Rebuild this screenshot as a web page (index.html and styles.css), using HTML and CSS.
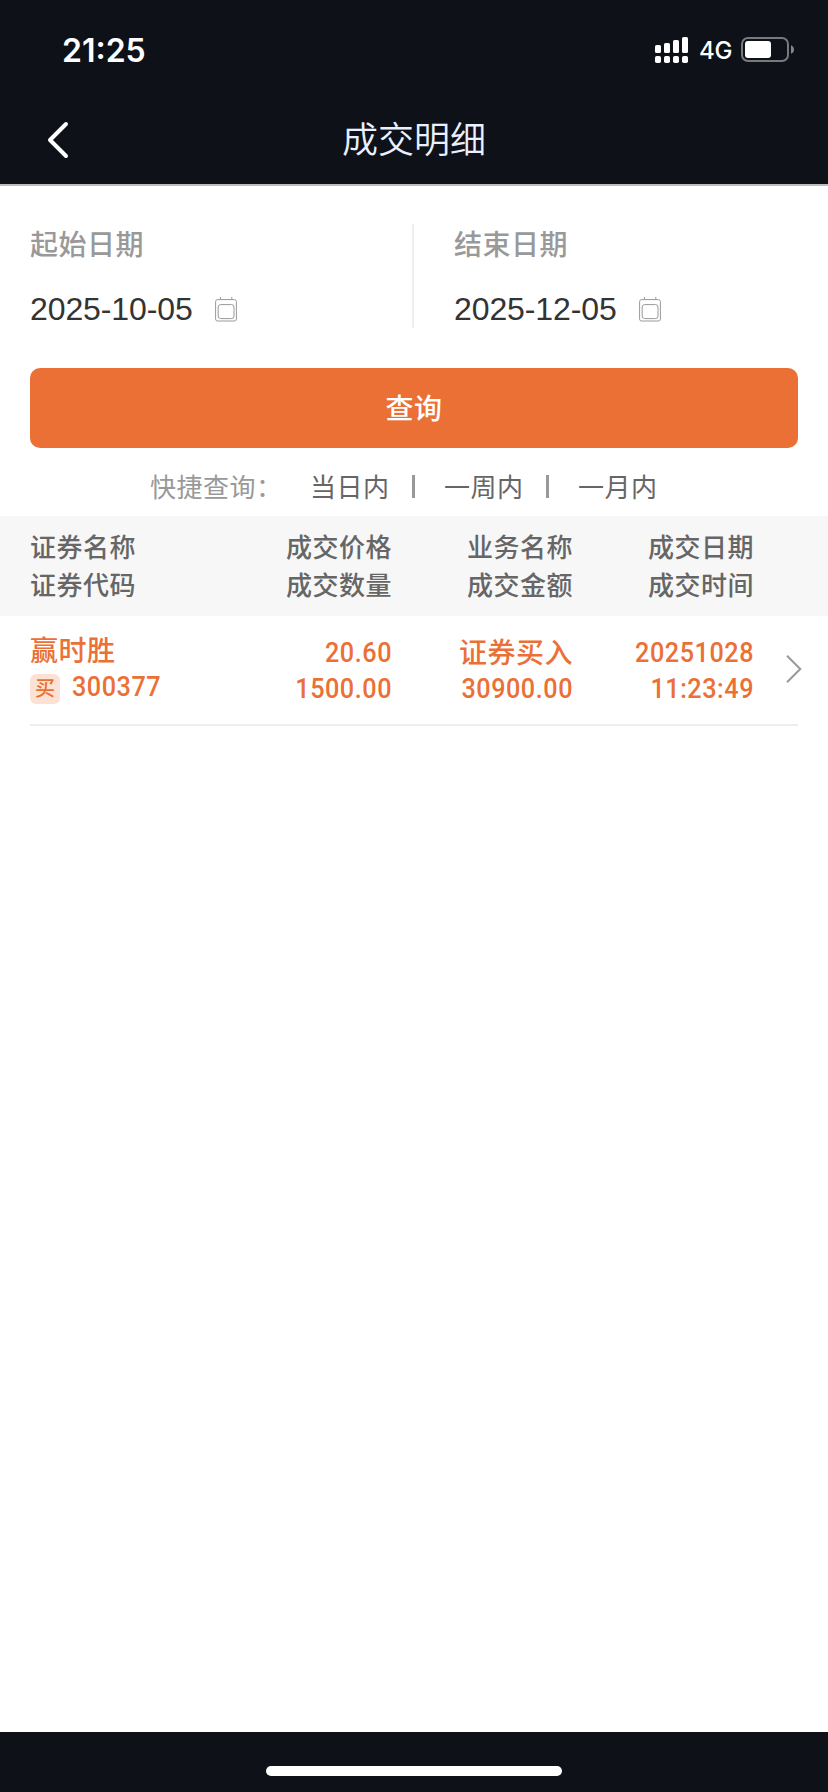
FILE: index.html
```html
<!DOCTYPE html>
<html lang="zh-CN">
<head>
<meta charset="utf-8">
<title>成交明细</title>
<link rel="stylesheet" href="styles.css">
</head>
<body>
<div class="screen">
  <header class="top">
    <div class="status">
      <span class="clock">21:25</span>
      <div class="indicators">
        <svg class="signal" width="34" height="26" viewBox="0 0 34 26" fill="#fff">
          <rect x="0" y="8" width="6" height="8" rx="1.5"/><rect x="9" y="6" width="6" height="10" rx="1.5"/><rect x="18" y="3" width="6" height="13" rx="1.5"/><rect x="27" y="0" width="6" height="16" rx="1.5"/>
          <rect x="0" y="19" width="6" height="7" rx="1.8"/><rect x="9" y="19" width="6" height="7" rx="1.8"/><rect x="18" y="19" width="6" height="7" rx="1.8"/><rect x="27" y="19" width="6" height="7" rx="1.8"/>
        </svg>
        <span class="network">4G</span>
        <svg class="battery" width="54" height="26" viewBox="0 0 54 26">
          <rect x="1" y="1" width="46" height="23" rx="6" fill="none" stroke="#77797d" stroke-width="2"/>
          <rect x="4" y="4" width="26" height="17" rx="3" fill="#fff"/>
          <path d="M50 8.2c1.8.7 3 2.3 3 4.3s-1.2 3.600-3 4.300z" fill="#85878a"/>
        </svg>
      </div>
    </div>
    <nav class="nav">
      <svg class="back" width="22" height="38" viewBox="0 0 22 38" fill="none" stroke="#fff" stroke-width="4" stroke-linecap="round" stroke-linejoin="round"><path d="M19 3 3 19l16 16"/></svg>
      <h1 class="title">成交明细</h1>
    </nav>
  </header>

  <main class="content">
    <section class="dates">
      <div class="date-field">
        <div class="label">起始日期</div>
        <div class="date"><span>2025-10-05</span>
          <svg class="calendar" width="22" height="25" viewBox="0 0 22 25" fill="none" stroke="#999"><rect x=".6" y="2.600" width="20.800" height="21.400" rx="2"/><rect x="3.200" y="7.600" width="15.800" height="14" rx="2.500"/><path d="M5.500 0v2.500M16.800 0v2.500"/></svg>
        </div>
      </div>
      <div class="date-field date-end">
        <div class="label">结束日期</div>
        <div class="date"><span>2025-12-05</span>
          <svg class="calendar" width="22" height="25" viewBox="0 0 22 25" fill="none" stroke="#999"><rect x=".6" y="2.600" width="20.800" height="21.400" rx="2"/><rect x="3.200" y="7.600" width="15.800" height="14" rx="2.500"/><path d="M5.500 0v2.500M16.800 0v2.500"/></svg>
        </div>
      </div>
    </section>

    <button class="query">查询</button>

    <div class="quick">
      <span class="quick-label">快捷查询：</span>
      <span class="quick-item">当日内</span><i class="bar"></i>
      <span class="quick-item">一周内</span><i class="bar"></i>
      <span class="quick-item">一月内</span>
    </div>

    <div class="row head">
      <div class="cell">证券名称<br>证券代码</div>
      <div class="cell">成交价格<br>成交数量</div>
      <div class="cell">业务名称<br>成交金额</div>
      <div class="cell">成交日期<br>成交时间</div>
    </div>

    <div class="row trade">
      <div class="cell stock">
        <div class="name">赢时胜</div>
        <div class="code"><span class="tag">买</span><span class="num">300377</span></div>
      </div>
      <div class="cell"><div class="num">20.60</div><div class="num">1500.00</div></div>
      <div class="cell"><div class="biz">证券买入</div><div class="num">30900.00</div></div>
      <div class="cell"><div class="num">20251028</div><div class="num">11:23:49</div></div>
      <svg class="more" width="16" height="28" viewBox="0 0 16 28" fill="none" stroke="#999" stroke-width="2"><path d="M1 .7 14.300 14 1 27.300"/></svg>
    </div>
    <div class="rule"></div>
  </main>

  <footer class="bottom"><div class="home"></div></footer>
</div>
</body>
</html>
```
FILE: styles.css
```css
* { box-sizing: border-box; }
body {
  margin: 0;
  background: #fff;
  font-family: "Noto Sans CJK SC", sans-serif;
}
.screen {
  width: 828px;
  height: 1792px;
  display: flex;
  flex-direction: column;
  overflow: hidden;
}
.top {
  height: 186px;
  background: #0e1118;
  border-bottom: 2px solid #bdbdbd;
}
.status {
  height: 96px;
  padding: 0 33px 0 62px;
  display: flex;
  justify-content: space-between;
  align-items: flex-start;
  color: #fff;
  font-family: Inter, sans-serif;
}
.clock {
  margin-top: 31px;
  font-size: 32px;
  line-height: 40px;
  font-weight: 600;
}
.indicators {
  margin-top: 37px;
  display: flex;
  align-items: flex-start;
}
.network {
  width: 33px;
  margin: 1px 9px 0 10px;
  font-size: 24px;
  line-height: 26px;
  font-weight: 500;
  letter-spacing: -.3px;
  white-space: nowrap;
}
.nav {
  height: 88px;
  padding: 0 47px;
  display: grid;
  grid-template-columns: 22px 1fr 22px;
  align-items: center;
}
.title {
  margin: -6px 0 0;
  color: #e9f0ff;
  font-size: 36px;
  line-height: 52px;
  font-weight: 350;
  text-align: center;
}
.content { flex: 1; }
.dates {
  display: flex;
  padding: 38px 0 40px 30px;
}
.date-field {
  width: 384px;
  height: 104px;
}
.date-field:first-child { border-right: 2px solid #eee; }
.date-end { padding-left: 40px; }
.label {
  margin-top: -1px;
  color: #999;
  font-size: 28px;
  line-height: 40px;
  font-weight: 500;
  letter-spacing: .5px;
}
.date {
  margin-top: 26px;
  display: flex;
  align-items: center;
  gap: 22px;
  height: 40px;
  color: #333;
  font-family: "Liberation Sans", sans-serif;
  font-size: 32px;
  letter-spacing: -.1px;
}
.query {
  display: block;
  width: 768px;
  height: 80px;
  margin: 0 30px;
  padding: 0 0 2px;
  border: 0;
  border-radius: 10px;
  background: #eb7036;
  color: #fff;
  font: 500 28px/78px "Noto Sans CJK SC", sans-serif;
  letter-spacing: .5px;
}
.quick {
  height: 68px;
  padding: 8px 0 0 150px;
  display: flex;
  align-items: center;
  color: #666;
  font-size: 26px;
  line-height: 40px;
  letter-spacing: .5px;
}
.quick-label {
  width: 160px;
  color: #999;
}
.quick-item { width: 80px; }
.bar {
  width: 3px;
  height: 23px;
  margin: 0 29px 0 22px;
  background: #999;
}
.row {
  position: relative;
  display: grid;
  grid-template-columns: repeat(4, 181px);
  padding: 0 74px 0 30px;
  text-align: right;
}
.cell:first-child { text-align: left; }
.head {
  height: 100px;
  padding-top: 11px;
  background: #f7f7f7;
  color: #666;
  font-size: 26px;
  line-height: 38px;
  font-weight: 500;
  letter-spacing: .5px;
}
.trade {
  height: 108px;
  padding-top: 19px;
  color: #eb7036;
}
.num {
  font-family: Roboto, sans-serif;
  font-size: 28px;
  line-height: 36px;
  font-weight: 500;
  letter-spacing: .6px;
  transform: scaleX(.9);
  transform-origin: right;
}
.name, .biz {
  height: 36px;
  font-size: 28px;
  line-height: 32px;
  font-weight: 500;
  letter-spacing: .5px;
}
.stock { margin-top: -2px; }
.code {
  display: flex;
  gap: 12px;
}
.code .num { transform-origin: left; }
.tag {
  width: 30px;
  height: 30px;
  margin-top: 5px;
  border-radius: 6px;
  background: #fbe2d5;
  font-size: 20px;
  line-height: 28px;
  font-weight: 500;
  text-align: center;
}
.more {
  position: absolute;
  left: 786px;
  top: 39px;
}
.rule {
  height: 2px;
  margin: 0 30px;
  background: #eee;
}
.bottom {
  height: 60px;
  padding-top: 34px;
  background: #0e1118;
}
.home {
  width: 296px;
  height: 10px;
  margin: 0 auto;
  border-radius: 5px;
  background: #fff;
}
```
